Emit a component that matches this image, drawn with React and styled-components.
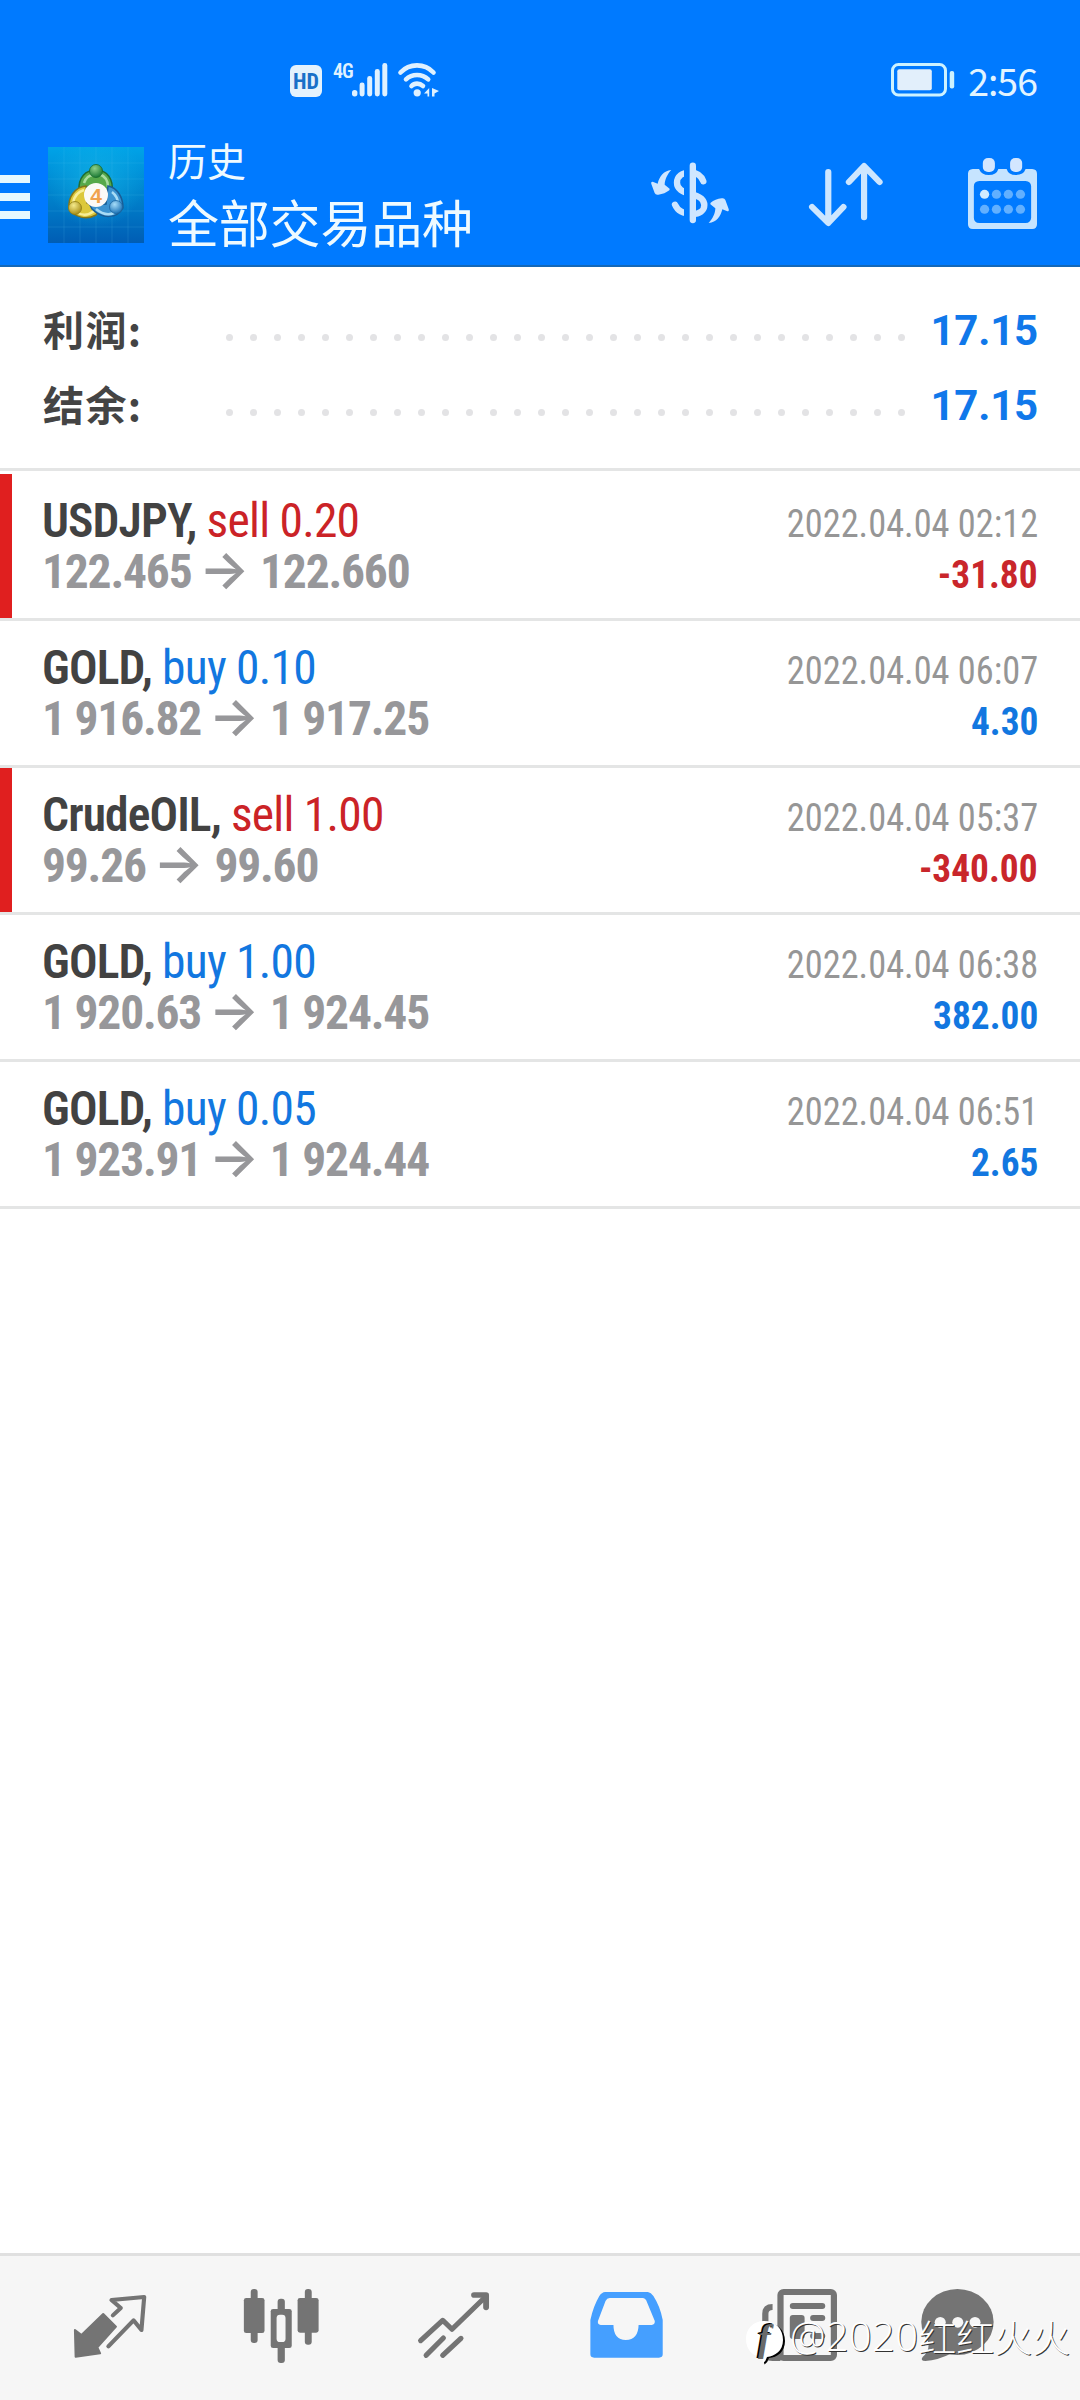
import React from "react";
import styled, { createGlobalStyle } from "styled-components";

const condensed = `"Roboto Condensed", Roboto, "Noto Sans CJK SC", sans-serif`;
const cjk = `"Noto Sans CJK SC", sans-serif`;

const GlobalStyle = createGlobalStyle`
  body { margin: 0; background: #fff; }
  *, *::before, *::after { box-sizing: border-box; }
  svg { display: block; overflow: visible; }
`;

const Screen = styled.div`
  position: relative;
  display: flex;
  flex-direction: column;
  width: 1080px;
  height: 2400px;
  overflow: hidden;
  background: #fff;
  font-family: ${condensed};
`;

const Header = styled.header`
  height: 267px;
  flex: none;
  background: #007aff;
  border-bottom: 2px solid #1468b8;
`;

const StatusBar = styled.div`
  display: flex;
  align-items: flex-start;
  height: 131px;
  padding: 63px 43px 0 290px;
  color: #dff1ff;
`;

const HdBadge = styled.span`
  width: 32px;
  height: 32px;
  margin-top: 2px;
  border-radius: 6px;
  background: #e4f2fd;
  color: #1a70c8;
  font: 700 22px/33px "Roboto Condensed", Roboto, sans-serif;
  text-align: center;
`;

const NetworkType = styled.span`
  width: 19px;
  margin: -2px 0 0 11px;
  font: 600 20px/20px "Roboto Condensed", Roboto, sans-serif;
  letter-spacing: -1px;
`;

const WifiSlot = styled.span`
  flex: 1;
  padding-left: 10px;
`;

const Clock = styled.span`
  margin: -3px 0 0 13px;
  font: 400 37.5px/40px ${cjk};
  letter-spacing: -1px;
  color: #e2f4ff;
`;

const AppBar = styled.div`
  display: flex;
  height: 134px;
  padding-right: 43px;
`;

const Menu = styled.div`
  display: flex;
  flex-direction: column;
  gap: 10px;
  width: 30px;
  padding-top: 44px;
`;

const MenuLine = styled.span`
  height: 8px;
  background: #e6f8ff;
`;

const Logo = styled.div`
  width: 96px;
  height: 96px;
  margin: 16px 0 0 18px;
`;

const Titles = styled.div`
  flex: 1;
  padding: 2px 0 0 24px;
  color: #eefaff;
  font-family: ${cjk};
`;

const Caption = styled.div`
  font-size: 39px;
  line-height: 52px;
`;

const Title = styled.div`
  font-size: 51px;
  line-height: 74px;
  margin-top: -1px;
  letter-spacing: -0.2px;
`;

const Actions = styled.div`
  display: flex;
  align-items: flex-start;
  padding-top: 19px;
`;

const Action = styled.div`
  width: ${(p) => p.$width}px;
  height: 90px;
  margin-left: ${(p) => p.$gap || 0}px;
`;

const Summary = styled.section`
  height: 204px;
  flex: none;
  padding: 28px 42px 0 43px;
  border-bottom: 3px solid #e4e5e5;
`;

const SummaryRow = styled.div`
  display: flex;
  align-items: center;
  height: 75px;
`;

const SummaryLabel = styled.span`
  width: 183px;
  height: 75px;
  color: #444;
  font: 700 41px/67px ${cjk};
  letter-spacing: 1.4px;
`;

const Leader = styled.span`
  display: flex;
  justify-content: space-between;
  width: 679px;
  padding-top: 10px;
`;

const Dot = styled.i`
  width: 7px;
  height: 7px;
  border-radius: 50%;
  background: #e3e3e5;
`;

const SummaryValue = styled.span`
  flex: 1;
  height: 75px;
  color: #1078ea;
  font: 700 42px/71px Roboto, sans-serif;
  letter-spacing: -0.2px;
  text-align: right;
`;

const Deals = styled.main`
  flex: 1;
  padding-top: 3px;
`;

const DealRow = styled.div`
  display: flex;
  height: 147px;
`;

const LossMark = styled.span`
  width: 12px;
  height: 144px;
  background: ${(p) => (p.$loss ? "#e01f1f" : "transparent")};
  box-shadow: 0 3px 0 #e4e5e5;
`;

const Deal = styled.article`
  display: flex;
  flex: 1;
  justify-content: space-between;
  padding: 21px 42px 0 30px;
  border-bottom: 3px solid #e4e5e5;
`;

const Line = styled.div`
  display: flex;
  align-items: baseline;
  height: 51px;
  line-height: 52px;
  white-space: pre;
`;

const Symbol = styled.span`
  color: #424242;
  font-size: 47.5px;
  font-weight: 600;
  letter-spacing: -0.9px;
`;

const Side = styled.span`
  margin-left: 10px;
  color: ${(p) => (p.$side === "sell" ? "#cb2327" : "#1277e0")};
  font-size: 47.5px;
  letter-spacing: -0.75px;
`;

const Prices = styled.span`
  color: #97979a;
  font-size: 47.5px;
  font-weight: 700;
  letter-spacing: -1.2px;
`;

const Arrow = styled.span`
  margin: 0 10.5px 0 7.5px;
  color: #97979a;
  font: 600 53px/44px Inter, sans-serif;
`;

const Meta = styled.div`
  display: flex;
  flex-direction: column;
  align-items: flex-end;
  margin-top: 3px;
`;

const Time = styled.time`
  height: 51px;
  color: #969696;
  font-size: 39.5px;
  line-height: 51px;
  transform: scaleX(0.92);
  transform-origin: right;
`;

const Profit = styled.span`
  height: 51px;
  color: ${(p) => (p.$loss ? "#c9262b" : "#1277e0")};
  font-size: 39.5px;
  font-weight: 700;
  line-height: 51px;
  transform: scaleX(0.945);
  transform-origin: right;
`;

const TabBar = styled.nav`
  display: grid;
  grid-template-columns: repeat(6, 1fr);
  justify-items: center;
  flex: none;
  height: 147px;
  padding: 29px 23px 0 24px;
  border-top: 3px solid #e0e0e0;
  background: #f6f6f6;
`;

const Tab = styled.div`
  width: 87.5px;
  height: 80px;
  color: ${(p) => (p.$active ? "#459fff" : "#747474")};
`;

const Watermark = styled.div`
  position: absolute;
  left: 746px;
  top: 2310px;
  display: flex;
  align-items: center;
  height: 52px;
  color: #fff;
  text-shadow: 1px 1px 0 #333;
  white-space: nowrap;
`;

const WatermarkLogo = styled.span`
  display: block;
  position: relative;
  width: 38px;
  height: 44px;
  margin: 12px 6px 0 0;
`;

const WatermarkF = styled.i`
  position: absolute;
  left: 12px;
  top: -2px;
  color: #6a6a6a;
  font: italic 700 38px/40px "Liberation Serif", serif;
  text-shadow: -1.5px -1px 0 #000;
`;

const WatermarkLatin = styled.span`
  font: 300 40px/52px "Open Sans", sans-serif;
  letter-spacing: 0.3px;
`;

const WatermarkName = styled.span`
  font: 300 38px/52px ${cjk};
`;

const SignalIcon = () => (
  <svg width="36" height="34" viewBox="0 0 36 34" fill="#dff1ff">
    <rect x="0" y="27" width="5.4" height="6.4" rx="2.6" />
    <rect x="7.6" y="19.5" width="5" height="14" rx="2.4" />
    <rect x="15.2" y="13" width="5" height="20.5" rx="2.4" />
    <rect x="22.8" y="6" width="5" height="27.5" rx="2.4" />
    <rect x="30.3" y="0" width="5" height="33.5" rx="2.4" />
  </svg>
);

const WifiIcon = () => (
  <svg width="42" height="34" viewBox="0 0 42 34" fill="none" stroke="#dff1ff" strokeWidth="4.6" strokeLinecap="round">
    <path d="M2.5 9.5C11.5 0 26.5 0 35.5 9.5" />
    <path d="M8 16.4C14 10.5 24 10.5 30.2 16.4" />
    <path d="M13.5 23C16.5 19.8 21.5 19.8 25 23" />
    <circle cx="19.2" cy="29.8" r="3.6" fill="#dff1ff" stroke="none" />
    <path d="M31.2 25V33.5H29.5V30.5H26zM34 25L41 28L36.5 30.5V33.5H34z" fill="#dff1ff" stroke="none" />
  </svg>
);

const BatteryIcon = () => (
  <svg width="64" height="34" viewBox="0 0 64 34">
    <rect x="1.5" y="1.5" width="53" height="30.5" rx="6" fill="none" stroke="#cdf2ff" strokeWidth="3" />
    <rect x="6.3" y="6.2" width="34.5" height="21" rx="2" fill="#e2effb" />
    <rect x="58.7" y="8" width="4.5" height="17.5" rx="2" fill="#cdf2ff" />
  </svg>
);

const LogoArt = () => (
  <svg width="96" height="96" viewBox="0 0 96 96">
    <defs>
      <linearGradient id="sky" x1="0" y1="0" x2="0" y2="1">
        <stop offset="0" stopColor="#00a3e8" />
        <stop offset="0.5" stopColor="#0083cc" />
        <stop offset="1" stopColor="#005db4" />
      </linearGradient>
      <radialGradient id="glow" cx="0.5" cy="0.35" r="0.5">
        <stop offset="0" stopColor="#17b9e8" stopOpacity="0.6" />
        <stop offset="1" stopColor="#17b9e8" stopOpacity="0" />
      </radialGradient>
      <radialGradient id="greenBall" cx="0.4" cy="0.3" r="0.7">
        <stop offset="0" stopColor="#8fd08a" />
        <stop offset="1" stopColor="#1c7a35" />
      </radialGradient>
      <radialGradient id="yellowBall" cx="0.4" cy="0.3" r="0.7">
        <stop offset="0" stopColor="#f4ea8c" />
        <stop offset="1" stopColor="#a98f17" />
      </radialGradient>
      <radialGradient id="blueBall" cx="0.4" cy="0.3" r="0.7">
        <stop offset="0" stopColor="#a6dcf8" />
        <stop offset="1" stopColor="#1d74b8" />
      </radialGradient>
    </defs>
    <rect width="96" height="96" fill="url(#sky)" />
    <rect width="96" height="96" fill="url(#glow)" />
    <path d="M0 16H96M0 32H96M0 48H96M0 64H96M0 80H96M16 0V96M32 0V96M48 0V96M64 0V96M80 0V96" stroke="#5cc6f0" strokeOpacity="0.15" />
    <path d="M31 44C30 30 38 23 48 23C59 23 66 32 64 46L58 55L48 38L38 40Z" fill="#57a94b" stroke="#206d32" strokeWidth="1.5" />
    <path d="M36 36C38 30 42 28 46 28M51 27C57 29 60 33 60 40" fill="none" stroke="#a9dca0" strokeWidth="2.5" />
    <path d="M38 39C27 40 20 50 21 61C26 71 39 73 48 68L52 62L39 56Z" fill="#dcc83c" stroke="#83751a" strokeWidth="1.5" />
    <path d="M36 43C29 45 26 50 25 56M30 66C36 69 41 68 46 64" fill="none" stroke="#f7ee98" strokeWidth="2.5" />
    <path d="M60 39C70 41 75 51 75 61C69 72 54 72 44 62L42 58L58 57Z" fill="#3b93d0" stroke="#1a5d96" strokeWidth="1.5" />
    <path d="M64 45C69 49 70 53 70 57M48 62C55 68 61 68 66 66" fill="none" stroke="#a8dcf5" strokeWidth="2.5" />
    <circle cx="48" cy="24" r="6.5" fill="url(#greenBall)" stroke="#176a2c" strokeWidth="0.8" />
    <circle cx="27" cy="61" r="6.5" fill="url(#yellowBall)" stroke="#8d7b14" strokeWidth="0.8" />
    <circle cx="68" cy="60" r="6.5" fill="url(#blueBall)" stroke="#1a649f" strokeWidth="0.8" />
    <circle cx="48" cy="48" r="12" fill="#fbfaf7" />
    <text x="48" y="55.5" textAnchor="middle" fontFamily="Liberation Sans, sans-serif" fontSize="21" fontWeight="700" fill="#f0a24d">4</text>
  </svg>
);

const CurrencyIcon = () => (
  <svg width="100" height="90" viewBox="0 0 300 270">
    <g fill="none" stroke="#cfe6ff" strokeWidth="19" strokeLinecap="round">
      <path d="M190 94C184 76 172 68 152 67C126 67 111 80 111 98C111 117 127 125 152 132C179 138 193 148 193 165C193 182 178 192 158 192C130 192 112 181 105 164" />
    </g>
    <rect x="132" y="50" width="18" height="160" fill="#007aff" />
    <path d="M158.5 47V210" stroke="#cfe6ff" strokeWidth="19" strokeLinecap="round" />
    <g fill="#cfe6ff">
      <path id="swirl" d="M94 60C70 62 58 80 53 101L38 95Q32 95 34 102L44 129Q47 136 55 134C68 133 79 128 88 121Q91 117 87 115L74 104C74 90 82 72 94 60Z" />
      <use href="#swirl" transform="rotate(180 150 139.5)" />
    </g>
  </svg>
);

const SortIcon = () => (
  <svg width="74" height="90" viewBox="781 330 215 270" preserveAspectRatio="none" fill="none" stroke="#cde6ff" strokeWidth="18" strokeLinecap="round" strokeLinejoin="round">
    <path d="M837 396V546M790 501L837 549L881 501" />
    <path d="M941 532V380M897 426L941 378L986 426" />
  </svg>
);

const CalendarIcon = () => (
  <svg width="69" height="90" viewBox="1243 330 200 270" preserveAspectRatio="none">
    <path fillRule="evenodd" fill="#c6e4ff" d="M1257 387H1275Q1282 405 1303 405Q1326 405 1331 387H1355Q1360 405 1382 405Q1404 405 1410 387H1429Q1443 388 1443 401V553Q1443 567 1429 567H1257Q1243 567 1243 553V401Q1243 388 1257 387ZM1276 423Q1260 424 1260 439V533Q1260 548 1276 549H1410Q1425 548 1426 533V439Q1425 424 1410 423Z" />
    <rect x="1286" y="354" width="35" height="42" rx="15" fill="#d3e6ff" />
    <rect x="1365" y="354" width="35" height="42" rx="15" fill="#d3e6ff" />
    {[463, 508].map((cy) =>
      [1291, 1325.5, 1360, 1395].map((cx) => (
        <circle key={`${cx}-${cy}`} cx={cx} cy={cy} r="13.5" fill={cx === 1291 && cy === 463 ? "#cfeaff" : "#62b0ff"} />
      ))
    )}
  </svg>
);

const TabSvg = ({ x, children }) => (
  <svg width="87.5" height="80" viewBox={`${x} 135 254 240`} preserveAspectRatio="none" fill="currentColor" strokeLinecap="round" strokeLinejoin="round">
    {children}
  </svg>
);

const QuotesIcon = () => (
  <TabSvg x={192}>
    <path d="M218 270L237 285L300 222L337 260L283 322L291 340L220 350Z" stroke="currentColor" strokeWidth="6" />
    <path d="M328 226L351 204L324 180L419 171L411 270L388 241L315 319" fill="none" stroke="currentColor" strokeWidth="12" />
  </TabSvg>
);

const ChartIcon = () => (
  <TabSvg x={692}>
    <rect x="709" y="174" width="60" height="105" rx="7" />
    <rect x="729" y="147" width="20" height="162" rx="9" />
    <rect x="865" y="174" width="61" height="104" rx="7" />
    <rect x="886" y="147" width="20" height="167" rx="9" />
    <rect x="787" y="207" width="61" height="117" rx="7" />
    <rect x="807" y="176" width="21" height="193" rx="9" />
    <rect x="804" y="224" width="26" height="82" rx="10" fill="#f6f6f6" />
  </TabSvg>
);

const TradeIcon = () => (
  <TabSvg x={1193}>
    <g fill="none" stroke="currentColor" strokeWidth="15">
      <path d="M1221 302L1285 241L1312 268L1408 172" />
      <path d="M1376 165H1411V202" strokeWidth="17" />
      <path d="M1237 346L1287 294M1285 346L1338 295" />
    </g>
  </TabSvg>
);

const HistoryIcon = () => (
  <TabSvg x={125.6}>
    <path fillRule="evenodd" d="M190 156H314Q323 158 330 168Q350 200 357 240V343Q357 353 346 353H158Q147 353 147 343V240Q155 200 173 168Q180 157 190 156ZM203 174Q195 174 191 183L169 243Q167 254 177 255H214Q214 299 250 300Q286 299 287 255H325Q335 254 334 243L309 181Q306 175 300 174Z" />
  </TabSvg>
);

const NewsIcon = () => (
  <TabSvg x={625}>
    <g fill="none" stroke="currentColor" strokeWidth="18">
      <rect x="699" y="156" width="155" height="198" rx="9" />
      <path d="M676 201Q655 201 655 221V335Q655 354 676 354H699" strokeLinecap="butt" />
      <path d="M735 198H820M794 234H820M794 288H820" />
    </g>
    <rect x="726" y="225" width="43" height="72" rx="9" />
  </TabSvg>
);

const MessagesIcon = () => (
  <TabSvg x={1124.6}>
    <ellipse cx="1213" cy="246" rx="105" ry="99" />
    <path d="M1122 290Q1140 325 1112 351Q1104 363 1120 363Q1155 361 1200 338Z" />
    <g fill="#f6f6f6">
      <circle cx="1163" cy="247" r="16" />
      <circle cx="1214" cy="247" r="16" />
      <circle cx="1264" cy="247" r="16" />
    </g>
  </TabSvg>
);

const deals = [
  { symbol: "USDJPY", side: "sell", volume: "0.20", open: "122.465", close: "122.660", time: "2022.04.04 02:12", profit: "-31.80" },
  { symbol: "GOLD", side: "buy", volume: "0.10", open: "1 916.82", close: "1 917.25", time: "2022.04.04 06:07", profit: "4.30" },
  { symbol: "CrudeOIL", side: "sell", volume: "1.00", open: "99.26", close: "99.60", time: "2022.04.04 05:37", profit: "-340.00" },
  { symbol: "GOLD", side: "buy", volume: "1.00", open: "1 920.63", close: "1 924.45", time: "2022.04.04 06:38", profit: "382.00" },
  { symbol: "GOLD", side: "buy", volume: "0.05", open: "1 923.91", close: "1 924.44", time: "2022.04.04 06:51", profit: "2.65" },
];

const summary = [
  { label: "利润:", value: "17.15" },
  { label: "结余:", value: "17.15" },
];

const tabs = [
  { name: "quotes", Icon: QuotesIcon },
  { name: "chart", Icon: ChartIcon },
  { name: "trade", Icon: TradeIcon },
  { name: "history", Icon: HistoryIcon, active: true },
  { name: "news", Icon: NewsIcon },
  { name: "messages", Icon: MessagesIcon },
];

export default function App() {
  return (
    <Screen>
      <GlobalStyle />
      <Header>
        <StatusBar>
          <HdBadge>HD</HdBadge>
          <NetworkType>4G</NetworkType>
          <SignalIcon />
          <WifiSlot>
            <WifiIcon />
          </WifiSlot>
          <BatteryIcon />
          <Clock>2:56</Clock>
        </StatusBar>
        <AppBar>
          <Menu>
            <MenuLine />
            <MenuLine />
            <MenuLine />
          </Menu>
          <Logo>
            <LogoArt />
          </Logo>
          <Titles>
            <Caption>历史</Caption>
            <Title>全部交易品种</Title>
          </Titles>
          <Actions>
            <Action $width={100}><CurrencyIcon /></Action>
            <Action $width={74} $gap={69}><SortIcon /></Action>
            <Action $width={69} $gap={85}><CalendarIcon /></Action>
          </Actions>
        </AppBar>
      </Header>
      <Summary>
        {summary.map(({ label, value }) => (
          <SummaryRow key={label}>
            <SummaryLabel>{label}</SummaryLabel>
            <Leader>
              {Array.from({ length: 29 }, (_, i) => (
                <Dot key={i} />
              ))}
            </Leader>
            <SummaryValue>{value}</SummaryValue>
          </SummaryRow>
        ))}
      </Summary>
      <Deals>
        {deals.map((deal) => {
          const loss = deal.profit.startsWith("-");
          return (
            <DealRow key={deal.time}>
              <LossMark $loss={loss} />
              <Deal>
                <div>
                  <Line>
                    <Symbol>{deal.symbol},</Symbol>
                    <Side $side={deal.side}>{deal.side} {deal.volume}</Side>
                  </Line>
                  <Line>
                    <Prices>{deal.open}</Prices>
                    <Arrow>→</Arrow>
                    <Prices>{deal.close}</Prices>
                  </Line>
                </div>
                <Meta>
                  <Time>{deal.time}</Time>
                  <Profit $loss={loss}>{deal.profit}</Profit>
                </Meta>
              </Deal>
            </DealRow>
          );
        })}
      </Deals>
      <TabBar>
        {tabs.map(({ name, Icon, active }) => (
          <Tab key={name} $active={active}>
            <Icon />
          </Tab>
        ))}
      </TabBar>
      <Watermark>
        <WatermarkLogo>
          <svg width="38" height="44" viewBox="0 0 38 44">
            <path d="M19.5 2.5C31.5 2.5 39 10 39 21C39 32 31 37.5 23 38Q22 42 18.5 44.5Q17 41 18 38Z" fill="#000" />
            <path d="M18 1C30 1 37 9 37 20C37 31 29 36 21 37Q20 41 17 43Q17 39 15 37C6 36 0 29 0 19C0 9 7 1 18 1Z" fill="#fff" />
          </svg>
          <WatermarkF>f</WatermarkF>
        </WatermarkLogo>
        <WatermarkLatin>@2020</WatermarkLatin>
        <WatermarkName>红红火火</WatermarkName>
      </Watermark>
    </Screen>
  );
}
